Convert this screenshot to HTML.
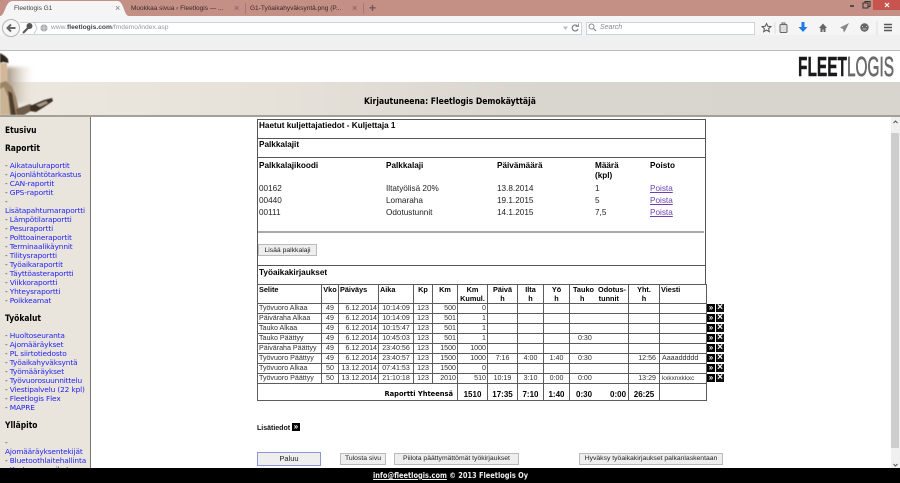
<!DOCTYPE html>
<html lang="fi"><head><meta charset="utf-8"><title>Fleetlogis G1</title>
<style>
*{box-sizing:border-box}
html,body{margin:0;padding:0;width:900px;height:483px;overflow:hidden;background:#fff}
body{position:relative;font-family:"Liberation Sans",sans-serif;color:#111;filter:blur(.32px)}
.a{position:absolute;white-space:nowrap}
#chrome .a{font-size:6.5px;color:#444}
.side{font-family:"DejaVu Sans",sans-serif;font-size:7.4px;line-height:9px;color:#333;left:5px;letter-spacing:-.14px}
.side i{font-style:normal;color:#2222f0}
.sh{font-family:"DejaVu Sans",sans-serif;font-weight:bold;font-size:8.4px;color:#000;left:5px;line-height:10px;transform:scaleX(.9);transform-origin:left}
.t{font-size:8.2px;line-height:10px;color:#222}
.b{font-weight:bold;color:#000}
.ln{position:absolute;background:#555}
.btn{position:absolute;background:#eee;border:1px solid #bbb;font-size:6.8px;color:#222;text-align:center;line-height:11px;white-space:nowrap}
table{position:absolute;left:257px;top:284px;width:449px;border-collapse:collapse;table-layout:fixed;font-size:7.1px;color:#333}
td{border:1px solid #5c5c5c;padding:0 1px;height:10px;line-height:9px;white-space:nowrap;overflow:hidden}
tr.h td{height:19px;vertical-align:top;font-weight:bold;color:#000;font-size:7.3px;text-align:center;line-height:9px;padding-top:0}
.r{text-align:right}.c{text-align:center}
tr.f td{height:17px;vertical-align:bottom;font-weight:bold;color:#000;font-size:8px;padding-bottom:1px;text-align:center}
.ic{position:absolute;width:8px;height:8px;background:#000;color:#fff;font-weight:bold;overflow:hidden;text-align:center}
.m{font-size:8px;line-height:7px}
.x{color:#fff;font-size:10px;line-height:8px;background:#111}
</style></head><body>

<div id="chrome">
<div class="a" style="left:0;top:0;width:900px;height:16px;background:#c48f85"></div>
<svg class="a" style="left:0;top:0" width="135" height="17"><path d="M0 16C5 16 5 2 12 1H118C124 2 124 16 129 16Z" fill="#f5f5f5"/></svg>
<div class="a" style="left:14px;top:5px">Fleetlogis G1</div>
<div class="a" style="left:115px;top:3px;font-size:9px;color:#777">×</div>
<div class="a" style="left:131px;top:5px;color:#3a2a28">Muokkaa sivua ‹ Fleetlogis — ...</div>
<div class="a" style="left:234px;top:3px;font-size:9px;color:#7a5f5a">×</div>
<div class="a" style="left:245px;top:3px;width:1px;height:11px;background:#a67a72"></div>
<div class="a" style="left:250px;top:5px;color:#3a2a28">G1-Työaikahyväksyntä.png (P...</div>
<div class="a" style="left:352px;top:3px;font-size:9px;color:#7a5f5a">×</div>
<div class="a" style="left:363px;top:3px;width:1px;height:11px;background:#a67a72"></div>
<div class="a" style="left:369px;top:1px;font-size:12px;font-weight:bold;color:#6b5a58">+</div>
<div class="a" style="left:873px;top:0;width:27px;height:10px;background:#c85450"></div>
<svg class="a" style="left:845px;top:0" width="55" height="11"><path d="M5 6h4" stroke="#333" stroke-width="1.5"/><path d="M18 3h5v5h-5zM20 3V1.500h5v5h-2" fill="none" stroke="#333"/><path d="M40 3l4 4M44 3l-4 4" stroke="#fff" stroke-width="1.2"/></svg>

<div class="a" style="left:0;top:16px;width:900px;height:34px;background:#f0f0f0"></div>
<div class="a" style="left:0;top:16px;width:900px;height:19px;background:#f5f5f5"></div>
<div class="a" style="left:0;top:50px;width:900px;height:1px;background:#bdbdbd"></div>
<div class="a" style="left:20px;top:22px;width:562px;height:13px;background:#fff;border:1px solid #ccd3da;border-left:0"></div>
<div class="a" style="left:586px;top:22px;width:169px;height:13px;background:#fff;border:1px solid #ccd3da"></div>
<svg class="a" style="left:0;top:16px" width="60" height="22">
<circle cx="11" cy="12" r="8.500" fill="#f7f7f7" stroke="#b4b4b4"/>
<path d="M15.500 12H8M11 8.500L7.500 12l3.500 3.500" fill="none" stroke="#666" stroke-width="2"/>
<path d="M23 17l6-6" stroke="#555" stroke-width="2"/><circle cx="29.500" cy="10" r="3" fill="#555"/>
<path d="M34 6l3 6-3 6" fill="none" stroke="#ccc"/>
<circle cx="44" cy="12" r="3.600" fill="#aaa"/><path d="M40.500 12h7M44 8.500v7" stroke="#eee" stroke-width=".6"/>
</svg>
<div class="a" style="left:51px;top:24px;font-size:6.700px;color:#999">www.<b style="color:#444">fleetlogis.com</b>/fmdemo/index.asp</div>
<svg class="a" style="left:560px;top:16px" width="340" height="22">
<path d="M3 10.500l2.500 3.500 2.500-3.500z" fill="#bbb"/>
<path d="M17.500 10a3 3 0 1 0 .5 3" fill="none" stroke="#778" stroke-width="1.200"/><path d="M15.500 10.500h3v-3" fill="none" stroke="#778" stroke-width=".8"/>
<circle cx="31.500" cy="10.500" r="2.500" fill="none" stroke="#888" stroke-width="1"/><path d="M33.500 12.500l2.500 2.500" stroke="#888" stroke-width="1.200"/>
<path d="M206.500 7.500l1.300 2.800 3.100.3-2.300 2.100.7 3-2.800-1.600-2.800 1.600.7-3-2.300-2.100 3.100-.3z" fill="none" stroke="#555" stroke-width="1"/>
<path d="M215 6v12" stroke="#ddd"/>
<rect x="220" y="8.500" width="7" height="8" rx="1" fill="#ddd" stroke="#666"/><path d="M222 8.500V7h3v1.500" fill="none" stroke="#666"/>
<path d="M241.500 6h3v5h3l-4.500 5-4.500-5h3z" fill="#1f7be8"/>
<path d="M259 12l4-4.500 4 4.500h-1.500v4h-2v-2.500h-1V16h-2v-4z" fill="#666"/>
<path d="M289 7l-9 4.500 3 1.500 .8 3.500 1.700-2.200z" fill="#888"/>
<circle cx="304.500" cy="11.500" r="4.200" fill="#666"/><path d="M302 10.500h1M306 10.500h1M302.500 13h4" stroke="#eee" stroke-width=".8"/>
<path d="M317 5v14" stroke="#ddd"/>
<path d="M324 8.500h8M324 11.500h8M324 14.500h8" stroke="#555" stroke-width="1.500"/>
</svg>
<div class="a" style="left:600px;top:24px;font-size:7px;font-style:italic;color:#888">Search</div>
</div>

<div class="a" style="left:0;top:51px;width:900px;height:31px;background:#fff"></div>
<div class="a" style="left:0;top:82px;width:900px;height:33px;background:linear-gradient(90deg,#ece8df 0,#e6e1d9 30%,#d9d5cf 60%,#d8d4ce 100%)"></div>
<svg class="a" style="left:0;top:51px" width="70" height="64">
<defs>
<linearGradient id="g1" x1="0" x2="1" y1="0" y2="0"><stop offset="0" stop-color="#a3907a"/><stop offset="1" stop-color="#e6dfd4" stop-opacity="0"/></linearGradient>
<filter id="f1"><feGaussianBlur stdDeviation="1.500"/></filter>
<filter id="f2"><feGaussianBlur stdDeviation=".6"/></filter>
</defs>
<path d="M6 16H34V52H6Z" fill="url(#g1)" filter="url(#f1)"/>
<g filter="url(#f2)">
<path d="M0 12H7V32L0 34Z" fill="#d2b899"/>
<path d="M0 2L5 5 8 8 8.500 12 3 11 0 12Z" fill="#2e251c"/>
<path d="M0 32L6 30 12 36 16 46 20 64H0Z" fill="#9b8468"/>
<path d="M0 38L4 36 8 46 10 64H0Z" fill="#c9b393"/>
<path d="M8 40L12 42 16 64H11Z" fill="#4e3d2d"/>
<path d="M16 58L30 53 36 57 24 64H17Z" fill="#6e5c49"/>
<path d="M30 55L44 49 52 47 53 50 44 56 36 61 30 60Z" fill="#3a2d22"/>
<path d="M36 54L46 50 48 52 40 56Z" fill="#a89884"/>
</g>
</svg>
<svg class="a" style="left:790px;top:50px" width="110" height="32">
<text x="8" y="26" font-family="Liberation Sans,sans-serif" font-weight="bold" font-size="28" textLength="49" lengthAdjust="spacingAndGlyphs" fill="#1a1a1a" stroke="#1a1a1a" stroke-width=".4">FLEET</text>
<text x="57" y="26" font-family="Liberation Sans,sans-serif" font-size="28" textLength="47" lengthAdjust="spacingAndGlyphs" fill="#6a6a6a" stroke="#6a6a6a" stroke-width=".7">LOGIS</text>
</svg>
<div class="a" style="left:364px;top:97px;font-family:'DejaVu Sans',sans-serif;font-weight:bold;font-size:8.600px;line-height:10px;color:#000;transform:scaleX(.89);transform-origin:left">Kirjautuneena: Fleetlogis Demokäyttäjä</div>
<div class="a" style="left:0;top:115px;width:900px;height:2px;background:#a3a098"></div>

<div class="a" style="left:0;top:117px;width:90px;height:351px;background:#e9e5dd;overflow:hidden"></div>
<div class="a" style="left:90px;top:117px;width:1px;height:351px;background:#777"></div>

<div class="a sh" style="top:125px">Etusivu</div>
<div class="a sh" style="top:143px">Raportit</div>
<div class="a side" style="top:161px">- <i>Aikatauluraportit</i></div>
<div class="a side" style="top:170px">- <i>Ajoonlähtötarkastus</i></div>
<div class="a side" style="top:179px">- <i>CAN-raportit</i></div>
<div class="a side" style="top:188px">- <i>GPS-raportit</i></div>
<div class="a side" style="top:197px">-</div>
<div class="a side" style="top:206px"><i>Lisätapahtumaraportti</i></div>
<div class="a side" style="top:215px">- <i>Lämpötilaraportti</i></div>
<div class="a side" style="top:224px">- <i>Pesuraportti</i></div>
<div class="a side" style="top:233px">- <i>Polttoaineraportit</i></div>
<div class="a side" style="top:242px">- <i>Terminaalikäynnit</i></div>
<div class="a side" style="top:251px">- <i>Tilitysraportti</i></div>
<div class="a side" style="top:260px">- <i>Työaikaraportit</i></div>
<div class="a side" style="top:269px">- <i>Täyttöasteraportti</i></div>
<div class="a side" style="top:278px">- <i>Viikkoraportti</i></div>
<div class="a side" style="top:287px">- <i>Yhteysraportti</i></div>
<div class="a side" style="top:296px">- <i>Poikkeamat</i></div>
<div class="a sh" style="top:313px">Työkalut</div>
<div class="a side" style="top:331px">- <i>Huoltoseuranta</i></div>
<div class="a side" style="top:340px">- <i>Ajomääräykset</i></div>
<div class="a side" style="top:349px">- <i>PL siirtotiedosto</i></div>
<div class="a side" style="top:358px">- <i>Työaikahyväksyntä</i></div>
<div class="a side" style="top:367px">- <i>Työmääräykset</i></div>
<div class="a side" style="top:376px">- <i>Työvuorosuunnittelu</i></div>
<div class="a side" style="top:385px">- <i>Viestipalvelu (22 kpl)</i></div>
<div class="a side" style="top:394px">- <i>Fleetlogis Flex</i></div>
<div class="a side" style="top:403px">- <i>MAPRE</i></div>
<div class="a sh" style="top:420px">Ylläpito</div>
<div class="a side" style="top:438px">-</div>
<div class="a side" style="top:447px"><i>Ajomääräyksentekijät</i></div>
<div class="a side" style="top:456px">- <i>Bluetoothlaitehallinta</i></div>
<div class="a side" style="top:465px">- <i>Kustannuspaikat</i></div>

<div class="ln" style="left:257px;top:119px;width:449px;height:1px"></div>
<div class="ln" style="left:257px;top:138px;width:449px;height:1px"></div>
<div class="ln" style="left:257px;top:157px;width:449px;height:1px"></div>
<div class="ln" style="left:257px;top:231px;width:447px;height:2px;background:#aaa"></div>
<div class="ln" style="left:257px;top:265px;width:449px;height:1px"></div>
<div class="ln" style="left:257px;top:119px;width:1px;height:166px"></div>
<div class="ln" style="left:705px;top:119px;width:1px;height:166px"></div>

<div class="a t b" style="left:259px;top:121px">Haetut kuljettajatiedot - Kuljettaja 1</div>
<div class="a t b" style="left:259px;top:140px">Palkkalajit</div>
<div class="a t b" style="left:259px;top:161px">Palkkalajikoodi</div>
<div class="a t b" style="left:386px;top:161px">Palkkalaji</div>
<div class="a t b" style="left:497px;top:161px">Päivämäärä</div>
<div class="a t b" style="left:595px;top:161px">Määrä</div>
<div class="a t b" style="left:595px;top:171px">(kpl)</div>
<div class="a t b" style="left:650px;top:161px">Poisto</div>
<div class="a t" style="left:259px;top:184px">00162</div><div class="a t" style="left:386px;top:184px">Iltatyölisä 20%</div><div class="a t" style="left:497px;top:184px">13.8.2014</div><div class="a t" style="left:595px;top:184px">1</div><div class="a t" style="left:650px;top:184px;color:#6a3fb0;text-decoration:underline">Poista</div>
<div class="a t" style="left:259px;top:196px">00440</div><div class="a t" style="left:386px;top:196px">Lomaraha</div><div class="a t" style="left:497px;top:196px">19.1.2015</div><div class="a t" style="left:595px;top:196px">5</div><div class="a t" style="left:650px;top:196px;color:#6a3fb0;text-decoration:underline">Poista</div>
<div class="a t" style="left:259px;top:208px">00111</div><div class="a t" style="left:386px;top:208px">Odotustunnit</div><div class="a t" style="left:497px;top:208px">14.1.2015</div><div class="a t" style="left:595px;top:208px">7,5</div><div class="a t" style="left:650px;top:208px;color:#6a3fb0;text-decoration:underline">Poista</div>
<div class="btn" style="left:258px;top:244px;width:59px;height:12px">Lisää palkkalaji</div>
<div class="a t b" style="left:259px;top:268px">Työaikakirjaukset</div>

<table>
<colgroup><col style="width:64px"><col style="width:17px"><col style="width:40px"><col style="width:35px"><col style="width:19px"><col style="width:25px"><col style="width:30px"><col style="width:30px"><col style="width:26px"><col style="width:26px"><col style="width:59px"><col style="width:31px"><col style="width:47px"></colgroup>
<tr class="h"><td style="text-align:left">Selite</td><td>Vko</td><td style="text-align:left">Päiväys</td><td style="text-align:left">Aika</td><td>Kp</td><td>Km</td><td>Km<br>Kumul.</td><td>Päivä<br>h</td><td>Ilta<br>h</td><td>Yö<br>h</td><td style="padding-right:0">Tauko &nbsp;Odotus-<br>h &nbsp; &nbsp; &nbsp; tunnit</td><td>Yht.<br>h</td><td style="text-align:left">Viesti</td></tr>
<tr><td>Työvuoro Alkaa</td><td class="c">49</td><td class="r">6.12.2014</td><td class="c">10:14:09</td><td class="c">123</td><td class="r">500</td><td class="r">0</td><td></td><td></td><td></td><td></td><td></td><td></td></tr>
<tr><td>Päiväraha Alkaa</td><td class="c">49</td><td class="r">6.12.2014</td><td class="c">10:14:09</td><td class="c">123</td><td class="r">501</td><td class="r">1</td><td></td><td></td><td></td><td></td><td></td><td></td></tr>
<tr><td>Tauko Alkaa</td><td class="c">49</td><td class="r">6.12.2014</td><td class="c">10:15:47</td><td class="c">123</td><td class="r">501</td><td class="r">1</td><td></td><td></td><td></td><td></td><td></td><td></td></tr>
<tr><td>Tauko Päättyy</td><td class="c">49</td><td class="r">6.12.2014</td><td class="c">10:45:03</td><td class="c">123</td><td class="r">501</td><td class="r">1</td><td></td><td></td><td></td><td style="padding-left:8px">0:30</td><td></td><td></td></tr>
<tr><td>Päiväraha Päättyy</td><td class="c">49</td><td class="r">6.12.2014</td><td class="c">23:40:56</td><td class="c">123</td><td class="r">1500</td><td class="r">1000</td><td></td><td></td><td></td><td></td><td></td><td></td></tr>
<tr><td>Työvuoro Päättyy</td><td class="c">49</td><td class="r">6.12.2014</td><td class="c">23:40:57</td><td class="c">123</td><td class="r">1500</td><td class="r">1000</td><td class="c">7:16</td><td class="c">4:00</td><td class="c">1:40</td><td style="padding-left:8px">0:30</td><td class="r" style="padding-right:3px">12:56</td><td style="padding-left:2px">Aaaaddddd</td></tr>
<tr><td>Työvuoro Alkaa</td><td class="c">50</td><td class="r">13.12.2014</td><td class="c">07:41:53</td><td class="c">123</td><td class="r">1500</td><td class="r">0</td><td></td><td></td><td></td><td></td><td></td><td></td></tr>
<tr><td>Työvuoro Päättyy</td><td class="c">50</td><td class="r">13.12.2014</td><td class="c">21:10:18</td><td class="c">123</td><td class="r">2010</td><td class="r">510</td><td class="c">10:19</td><td class="c">3:10</td><td class="c">0:00</td><td style="padding-left:8px">0:00</td><td class="r" style="padding-right:3px">13:29</td><td style="font-size:6.4px;padding-left:2px">kxkxnxkkxc</td></tr>
<tr class="f"><td colspan="6" style="text-align:right;padding-right:4px;font-family:'DejaVu Sans',sans-serif;font-size:6.700px">Raportti Yhteensä</td><td>1510</td><td>17:35</td><td>7:10</td><td>1:40</td><td style="text-align:left;padding-left:6px"><span style="margin-right:18px">0:30</span><span>0:00</span></td><td>26:25</td><td></td></tr>
</table>

<div class="ic m" style="left:707px;top:304px">»</div><div class="ic x" style="left:716px;top:304px">×</div>
<div class="ic m" style="left:707px;top:314px">»</div><div class="ic x" style="left:716px;top:314px">×</div>
<div class="ic m" style="left:707px;top:324px">»</div><div class="ic x" style="left:716px;top:324px">×</div>
<div class="ic m" style="left:707px;top:334px">»</div><div class="ic x" style="left:716px;top:334px">×</div>
<div class="ic m" style="left:707px;top:344px">»</div><div class="ic x" style="left:716px;top:344px">×</div>
<div class="ic m" style="left:707px;top:354px">»</div><div class="ic x" style="left:716px;top:354px">×</div>
<div class="ic m" style="left:707px;top:364px">»</div><div class="ic x" style="left:716px;top:364px">×</div>
<div class="ic m" style="left:707px;top:374px">»</div><div class="ic x" style="left:716px;top:374px">×</div>

<div class="a" style="left:257px;top:424px;font-size:7px;font-weight:bold;line-height:10px">Lisätiedot</div>
<div class="ic m" style="left:292px;top:423px">»</div>

<div class="btn" style="left:257px;top:452px;width:64px;height:14px;border-color:#8d97d8;background:#eee;line-height:12px;font-size:7.500px">Paluu</div>
<div class="btn" style="left:340px;top:453px;width:46px;height:12px;line-height:10px">Tulosta sivu</div>
<div class="btn" style="left:394px;top:453px;width:125px;height:12px;line-height:10px">Piilota päättymättömät työkirjaukset</div>
<div class="btn" style="left:579px;top:453px;width:144px;height:12px;line-height:10px">Hyväksy työaikakirjaukset palkanlaskentaan</div>

<div class="a" style="left:891px;top:117px;width:9px;height:351px;background:#f0f0f0"></div>
<div class="a" style="left:891px;top:133px;width:8px;height:315px;background:#cdcdcd"></div>
<svg class="a" style="left:891px;top:117px" width="9" height="351"><path d="M2.500 6l2-2 2 2M2.500 347l2 2 2-2" fill="none" stroke="#555"/></svg>

<div class="a" style="left:0;top:468px;width:900px;height:15px;background:#000"></div>
<div class="a" style="left:373px;top:470px;font-family:'DejaVu Sans',sans-serif;font-weight:bold;font-size:8.300px;line-height:10px;color:#eee;transform:scaleX(.8);transform-origin:left"><u>info@fleetlogis.com</u> © 2013 Fleetlogis Oy</div>
</body></html>
